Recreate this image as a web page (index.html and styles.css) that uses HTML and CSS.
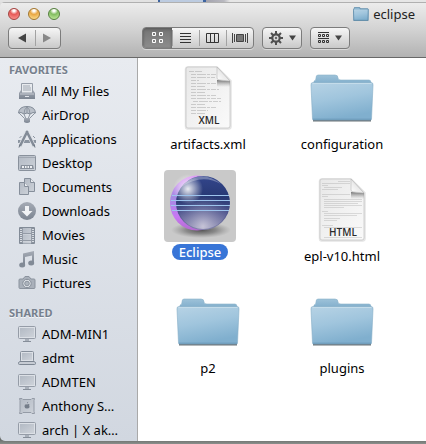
FILE: index.html
```html
<!DOCTYPE html>
<html lang="en">
<head>
<meta charset="utf-8">
<title>eclipse</title>
<link rel="stylesheet" href="styles.css">
</head>
<body>
<svg class="defs" aria-hidden="true">
  <defs>
    <linearGradient id="folder" x1="0" y1="0" x2="0.3" y2="1"><stop offset="0" stop-color="#b7d3e5"/><stop offset="0.5" stop-color="#a0c5dd"/><stop offset="1" stop-color="#80afce"/></linearGradient>
    <linearGradient id="tab" x1="0" y1="0" x2="0" y2="1"><stop offset="0" stop-color="#9dc2d9"/><stop offset="1" stop-color="#76a6c6"/></linearGradient>
    <linearGradient id="paper" x1="0" y1="0" x2="1" y2="1"><stop offset="0" stop-color="#e8e8e8"/><stop offset="1" stop-color="#fafafa"/></linearGradient>
    <linearGradient id="curl" x1="0" y1="1" x2="1" y2="0"><stop offset="0" stop-color="#fff"/><stop offset="1" stop-color="#d0d0d0"/></linearGradient>
    <linearGradient id="fold-shade" x1="0" y1="0" x2="0" y2="1"><stop offset="0" stop-color="#555" stop-opacity="0.8"/><stop offset="1" stop-color="#999" stop-opacity="0"/></linearGradient>
    <linearGradient id="steel" x1="0" y1="0" x2="0" y2="1"><stop offset="0" stop-color="#a5abb5"/><stop offset="1" stop-color="#7b8491"/></linearGradient>
    <linearGradient id="screen" x1="0" y1="0" x2="1" y2="1"><stop offset="0" stop-color="#b3bac4"/><stop offset="1" stop-color="#cdd2d9"/></linearGradient>
    <linearGradient id="orb" x1="0" y1="0" x2="0" y2="1"><stop offset="0" stop-color="#33468c"/><stop offset="0.4" stop-color="#273873"/><stop offset="0.7" stop-color="#50568e"/><stop offset="1" stop-color="#8484ac"/></linearGradient>
    <radialGradient id="glow" cx="0.5" cy="0.95" r="0.6"><stop offset="0" stop-color="#d4d1e0" stop-opacity="0.85"/><stop offset="1" stop-color="#8e8db4" stop-opacity="0"/></radialGradient>
    <radialGradient id="shine" cx="0.5" cy="0.5" r="0.5"><stop offset="0" stop-color="#fff" stop-opacity="0.9"/><stop offset="1" stop-color="#fff" stop-opacity="0"/></radialGradient>
    <linearGradient id="crescent" x1="0" y1="0" x2="0" y2="1"><stop offset="0" stop-color="#e09af5"/><stop offset="0.4" stop-color="#a48ae2"/><stop offset="0.75" stop-color="#c878f3"/><stop offset="1" stop-color="#b36bd0"/></linearGradient>
    <radialGradient id="shadow"><stop offset="0" stop-color="#333" stop-opacity="0.8"/><stop offset="0.5" stop-color="#555" stop-opacity="0.55"/><stop offset="1" stop-color="#777" stop-opacity="0"/></radialGradient>
  </defs>
  <symbol id="i-folder" viewBox="0 0 64 48">
    <path d="M3 46.500H61" stroke="#6b7479" stroke-width="2"/>
    <path d="M4 9V7q2 0 2-3Q6 1 8 1h17q3 0 3 3 0 2 3 2h28q2 0 2 3v4H4z" fill="url(#tab)" stroke="#8ab1c9" stroke-width="0.600"/>
    <path d="M1 11q-.3-2.500 2-2.500h58q2.300 0 2 2.500L61.500 45q0 1-1 1h-57q-1 0-1-1z" fill="url(#folder)" stroke="#85adc6" stroke-width="0.600"/>
    <path d="M2.500 9.500h59" stroke="#c4dcea"/>
    <path d="M3 45.200h58" stroke="#6b99b7"/>
  </symbol>
  <symbol id="i-page" viewBox="0 0 48 64">
    <path d="M2 3.500q0-2 2-2H33L46.500 15v45.500q0 2-2 2H3.500q-1.500 0-1.500-2z" fill="none" stroke="#999" stroke-opacity="0.250" stroke-width="2.500"/>
    <path d="M2 3q0-2 2-2H33L46 15v45q0 2-2 2H4q-2 0-2-2z" fill="url(#paper)" stroke="#c6c6c6" stroke-width="0.800"/>
    <path d="M33 14L46 15v6H33z" fill="url(#fold-shade)"/>
    <path d="M33 1v11q0 2 3 2l10 1z" fill="url(#curl)" stroke="#b5b5b5" stroke-width="0.600"/>
  </symbol>
  <symbol id="i-display" viewBox="0 0 18 18">
    <rect x="0.500" y="1.500" width="17" height="12" rx="1" fill="#dce0e6" stroke="#959ca7"/>
    <path d="M2 3h14v9H2z" fill="url(#screen)"/>
    <path d="M7 14h4v2H7z" fill="#a8afb9"/><path d="M5 16.500h8" stroke="#868e99"/>
  </symbol>
</svg>

<div class="desktop"></div>
<main class="window">
  <header class="toolbar">
    <div class="titlebar">
      <div class="lights">
        <button class="light red" aria-label="Close"></button>
        <button class="light yellow" aria-label="Minimize"></button>
        <button class="light green" aria-label="Zoom"></button>
      </div>
      <h1 class="title"><svg width="16" height="14" viewBox="0 0 64 48" preserveAspectRatio="none"><use href="#i-folder" width="64" height="48"/><path d="M2 11V8q3 0 3-4Q5 1 8 1h17q3 0 3 5h31q2 0 2 3v2l-1 35H3z" fill="none" stroke="#5b89a7" stroke-width="3"/></svg>eclipse</h1>
    </div>
    <div class="controls">
      <div class="group nav">
        <button aria-label="Back"><svg width="10" height="10"><path d="M1 5L9 .5v9z" fill="#444"/></svg></button>
        <button aria-label="Forward"><svg width="10" height="10"><path d="M9 5L1 .5v9z" fill="#888"/></svg></button>
      </div>
      <div class="group views">
        <button class="on" aria-label="Icon view"><svg width="12" height="12" fill="none" stroke="#fff"><path d="M.5.5h3v3h-3zM7.500.5h3v3h-3zM.5 7.500h3v3h-3zM7.500 7.500h3v3h-3z"/></svg></button>
        <button aria-label="List view"><svg width="11" height="10" stroke="#333"><path d="M0 .5h11M0 3.500h11M0 6.500h11M0 9.500h11"/></svg></button>
        <button aria-label="Column view"><svg width="13" height="10" fill="none" stroke="#333"><path d="M.5.5h12v9H.5zM4.500 0v10M8.500 0v10" /></svg></button>
        <button aria-label="Cover Flow"><svg width="16" height="10" fill="none" stroke="#444"><path d="M.5 0v10M2.500 1v8M13.500 1v8M15.500 0v10"/><path d="M4.500 1.500h7v7h-7z" fill="#777"/></svg></button>
      </div>
      <div class="group menu">
        <button aria-label="Action"><svg width="14" height="14" viewBox="-7 -7 14 14"><path d="M0-7V7M-7 0H7M-5-5L5 5M-5 5L5-5" stroke="#505050" stroke-width="2"/><circle r="3.700" fill="#ddd" stroke="#505050" stroke-width="2.200"/><circle r="1.200" fill="#666"/></svg><svg width="7" height="6"><path d="M0 .5h7L3.500 5.500z" fill="#444"/></svg></button>
      </div>
      <div class="group menu">
        <button aria-label="Arrange"><svg width="11" height="12" fill="none" stroke="#333"><path d="M0 .5h11M0 6.500h11"/><path d="M.5 2.500h2v2h-2zM4.500 2.500h2v2h-2zM8.500 2.500h2v2h-2zM.5 8.500h2v2h-2zM4.500 8.500h2v2h-2zM8.500 8.500h2v2h-2z"/></svg><svg width="7" height="6"><path d="M0 .5h7L3.500 5.500z" fill="#444"/></svg></button>
      </div>
    </div>
  </header>

  <div class="body">
    <nav class="sidebar">
      <h2>FAVORITES</h2>
      <ul>
        <li><a href="#files"><svg viewBox="0 0 18 18"><path d="M3.500 1.500h11V11h-11z" fill="#e7eaee" stroke="#979ea9"/><path d="M5 4h7M5 6h8M5 8h8" stroke="#a0a7b1"/><path d="M3 8l-2 3v6h16v-6l-2-3v3H3z" fill="url(#steel)"/><path d="M2 12h14" stroke="#c3c8d0"/><path d="M7 14.500h4" stroke="#e2e5ea"/></svg>All My Files</a></li>
        <li><a href="#airdrop"><svg viewBox="0 0 18 18"><path d="M.5 7Q1 .5 9 .5T17.500 7L15 6.500 12 8 9 7 6 8 3 6.500z" fill="#bac0c9" stroke="#828b97"/><path d="M6 8Q6 3 9 1q3 2 3 7M9 1v6" fill="none" stroke="#8e96a1"/><path d="M1 7l6 6M17 7l-6 6M6 8l2 5M12 8l-2 5" stroke="#8e96a1" fill="none"/><path d="M6 12h6v4q-3 2-6 0z" fill="url(#steel)"/></svg>AirDrop</a></li>
        <li><a href="#applications"><svg viewBox="0 0 18 18"><path d="M0 10h18v3H0z" fill="#8c95a1"/><path d="M3.500 6l-2 2M15 6l2 2" stroke="#8c95a1"/><path d="M8 2L2 17M10 2l6 15" stroke="#dfe3e8" stroke-width="4"/><path d="M9.500 1L2 16M8.500 1L16 16" stroke="#838c98" stroke-width="2.500"/><path d="M1 17.500l1-3M17 17.500l-1-3" stroke="#69727e"/></svg>Applications</a></li>
        <li><a href="#desktop"><svg viewBox="0 0 18 18"><rect x=".5" y="1.500" width="17" height="15" rx="1" fill="url(#screen)" stroke="#89919c"/><path d="M1 3.500h16" stroke="#a0a7b1"/><path d="M3 11h12l1 4H2z" fill="#89919c"/><path d="M4 13h2M7 13h1.500M9.500 13H11M12 13h2" stroke="#eef0f3" stroke-width="2"/></svg>Desktop</a></li>
        <li><a href="#documents"><svg viewBox="0 0 18 18"><g fill="url(#screen)" stroke="#868f9b"><path d="M6.500.5h6l4 4v9h-10z"/><path d="M12.500.5v4h4" fill="#e8ebef"/><path d="M1.500 4.500h5l4 4v8h-9z"/><path d="M6.500 4.500v4h4" fill="#e8ebef"/></g></svg>Documents</a></li>
        <li><a href="#downloads"><svg viewBox="0 0 18 18"><circle cx="9" cy="9" r="9" fill="url(#steel)"/><path d="M7 4h4v5h3.500L9 14.500 3.500 9H7z" fill="#f0f2f5"/></svg>Downloads</a></li>
        <li><a href="#movies"><svg viewBox="0 0 18 18"><path d="M1.500 1.500h15v16h-15z" fill="#d8dce2" stroke="#828b97"/><path d="M3 2v15M15 2v15" stroke="#8b939e" stroke-width="2" stroke-dasharray="1 1"/><path d="M5 2h8v5H5zM5 8.500h8v5.500H5zM5 15.500h8v2H5z" fill="url(#screen)"/><path d="M5 7.500h8M5 14.500h8M4.500 2v15M13.500 2v15" stroke="#949ba6"/></svg>Movies</a></li>
        <li><a href="#music"><svg viewBox="0 0 18 18"><path d="M5 3.500L16 1v12h-2V5.500L7 7v8H5z" fill="url(#steel)"/><ellipse cx="4.200" cy="15" rx="3" ry="2.500" fill="#818a96"/><ellipse cx="13.200" cy="13" rx="3" ry="2.500" fill="#818a96"/></svg>Music</a></li>
        <li><a href="#pictures"><svg viewBox="0 0 18 18"><path d="M2 5h3l2-2.500h4L13 5h3q1 0 1 1v7.500q0 1-1 1H2q-1 0-1-1V6q0-1 1-1z" fill="#a9b0ba" stroke="#8b939e"/><circle cx="9" cy="9.500" r="4.200" fill="#dfe3e8" stroke="#848c97"/><circle cx="9" cy="9.500" r="2.300" fill="#adb4bd" stroke="#8b939e"/></svg>Pictures</a></li>
      </ul>
      <h2>SHARED</h2>
      <ul>
        <li><a href="#adm-min1"><svg><use href="#i-display"/></svg>ADM-MIN1</a></li>
        <li><a href="#admt"><svg viewBox="0 0 18 18"><rect x="2.500" y="2.500" width="13" height="10" rx="1" fill="#dce0e6" stroke="#868f9b"/><path d="M4 4h10v7H4z" fill="url(#screen)"/><path d="M2 12.500h14l1.500 1v1q0 1-1 1h-15q-1 0-1-1v-1z" fill="#c7ccd4" stroke="#7d8692"/></svg>admt</a></li>
        <li><a href="#admten"><svg><use href="#i-display"/></svg>ADMTEN</a></li>
        <li><a href="#anthony"><svg viewBox="0 0 18 18"><path d="M1.500 1.500H4l1 1h8l1-1h2.500l-.5 2v11l.5 2H14l-1-1H5l-1 1H1.500l.5-2v-11z" fill="url(#screen)" stroke="#949ba6" stroke-linejoin="round"/><path d="M9 7.500q2-1 2.500.3-.8 1 .2 2.200-1 2-2.700 1.200-2 .8-2.500-1.700Q6.500 6.800 9 7.500zM9 6.500q0-1.500 1.200-1.800Q10.300 6.200 9 6.500z" fill="#747d89"/></svg>Anthony S…</a></li>
        <li><a href="#arch"><svg><use href="#i-display"/></svg>arch | X ak…</a></li>
      </ul>
    </nav>

    <section class="files">
      <a class="item" href="#artifacts"><span class="icon"><svg width="48" height="64" viewBox="0 0 48 64"><use href="#i-page"/><g stroke="#888" opacity=".35" stroke-dasharray="5 1 9 1 3 1"><path d="M5 5.500h13M7 8.500h25M7 11.500h24M7 14.500h8M7 17.500h26M7 20.500h14M7 23.500h28M7 26.500h14M7 29.500h25M7 32.500h30M9 35.500h28M7 38.500h14M7 41.500h25M7 44.500h17M7 47.500h14"/></g><text x="25" y="58" class="kind">XML</text></svg></span><span class="name">artifacts.xml</span></a>
      <a class="item" href="#configuration"><span class="icon"><svg width="64" height="48"><use href="#i-folder"/></svg></span><span class="name">configuration</span></a>
      <a class="item selected" href="#eclipse"><span class="icon"><svg width="72" height="72" viewBox="0 0 72 72">
        <ellipse cx="37" cy="60" rx="30" ry="8" fill="url(#shadow)"/>
        <ellipse cx="33" cy="33" rx="27" ry="27.500" fill="url(#crescent)"/>
        <ellipse cx="39" cy="33" rx="27" ry="27" fill="url(#orb)"/>
        <ellipse cx="39" cy="33" rx="26" ry="26" fill="url(#glow)"/>
        <ellipse cx="24" cy="19" rx="15" ry="15" fill="url(#shine)"/>
        <path d="M17 17Q36-3 57 14 38 3 17 17z" fill="#fff" opacity=".3"/>
        <path d="M8 25.500h57M7 30.500h59M7 35.500h59M8 40.500h57" stroke="#9dc4ed"/>
      </svg></span><span class="name">Eclipse</span></a>
      <a class="item" href="#epl"><span class="icon"><svg width="48" height="64" viewBox="0 0 48 64"><use href="#i-page"/><g stroke="#888" opacity=".25"><path d="M20 3.500h12M4 5.500h28M4 7.500h6M6 9.500h18M4 11.500h16M4 16.500h28M4 18.500h6M6 21.500h38M6 23.500h38M6 25.500h34M6 27.500h38M6 29.500h20M4 33.500h6M6 35.500h38M6 37.500h33M6 40.500h16M6 42.500h13M4 47.500h11M6 49.500h38M6 59.500h38"/></g><text x="25" y="58" class="kind">HTML</text></svg></span><span class="name">epl-v10.html</span></a>
      <a class="item" href="#p2"><span class="icon"><svg width="64" height="48"><use href="#i-folder"/></svg></span><span class="name">p2</span></a>
      <a class="item" href="#plugins"><span class="icon"><svg width="64" height="48"><use href="#i-folder"/></svg></span><span class="name">plugins</span></a>
    </section>
  </div>
</main>
</body>
</html>
```
FILE: styles.css
```css
* { box-sizing: border-box; }

body {
  margin: 0;
  height: 100vh;
  display: flex;
  flex-direction: column;
  padding-bottom: 3px;
  background: linear-gradient(#4e524f, #8b8f8c) bottom / 100% 8px no-repeat #dedede;
  font: 13px/16px "Noto Sans", "Open Sans", sans-serif;
  color: #000;
}

svg { display: block; flex: none; }
.defs { position: absolute; width: 0; height: 0; }
a { color: inherit; text-decoration: none; }

.desktop {
  height: 2px;
  flex: none;
  background: linear-gradient(90deg, #e2e2e2 158px, #3c63a0 158px, #3c63a0 160px, #bccbe0 160px, #bccbe0 203px, #3c63a0 203px, #3c63a0 206px, #a3a3ae 206px, #b9b9c0 224px, #e6e6e6 230px);
}

.window {
  flex: 1;
  min-height: 0;
  display: flex;
  flex-direction: column;
  border-radius: 5px 0 0 5px;
  overflow: hidden;
}

.toolbar {
  height: 56px;
  flex: none;
  border-top: 1px solid #b0b0b0;
  border-bottom: 1px solid #686868;
  background: linear-gradient(#ececec, #d2d2d2 50%, #b2b2b2);
}

.titlebar {
  display: flex;
  align-items: center;
  justify-content: space-between;
  height: 22px;
  padding: 0 11px 0 8px;
}

.lights { display: flex; gap: 8px; }
.light {
  width: 12px;
  height: 12px;
  padding: 0;
  border: 1px solid;
  border-radius: 50%;
}
.red { background: radial-gradient(circle at 50% 15%, #fff 0 10%, #e65a58 40%, #ff9d98); border-color: #a24340; }
.yellow { background: radial-gradient(circle at 50% 15%, #fff 0 10%, #e9a744 40%, #ffe79a); border-color: #a2762f; }
.green { background: radial-gradient(circle at 50% 15%, #fff 0 10%, #83bd62 40%, #cbf2a5); border-color: #557f40; }

.title {
  display: flex;
  align-items: center;
  gap: 4px;
  margin: 0;
  font-size: 13px;
  font-weight: 400;
  color: #222;
}

.controls { display: flex; gap: 8px; padding: 2px 8px; }
.group {
  display: flex;
  height: 22px;
  border: 1px solid #7c7c7c;
  border-radius: 4px;
  background: linear-gradient(#f6f6f6, #c9c9c9);
  box-shadow: 0 1px 0 #d8d8d8;
  overflow: hidden;
}
.group button {
  flex: 1;
  display: flex;
  align-items: center;
  justify-content: center;
  gap: 6px;
  padding: 0;
  border: 0;
  background: linear-gradient(#a2a2a2, #a2a2a2) left / 1px 16px no-repeat;
}
.group button:first-child { background: none; }
.group .on:first-child { background: linear-gradient(#747474, #8d8d8d); box-shadow: inset 0 1px 3px #555; }
.nav { width: 53px; margin-right: 73px; }
.views { width: 112px; }
.views .on { flex: 0 0 29px; }
.menu { width: 40px; }

.body { flex: 1; min-height: 0; display: flex; }

.sidebar {
  width: 138px;
  flex: none;
  padding-top: 4px;
  overflow: hidden;
  border-right: 1px solid #a9a9a9;
  background: linear-gradient(#e8ebf0, #d1d7e0);
}
.sidebar h2 {
  margin: 0;
  padding-left: 9px;
  font-size: 11px;
  line-height: 16px;
  font-weight: 700;
  color: #76808d;
  text-shadow: 0 1px 0 #f4f6f8;
}
.sidebar ul { margin: 0 0 10px; padding: 1px 0 0; list-style: none; }
.sidebar a {
  display: flex;
  align-items: center;
  gap: 6px;
  height: 24px;
  padding-left: 18px;
  white-space: nowrap;
}
.sidebar svg { width: 18px; height: 18px; }

.files {
  flex: 1;
  display: grid;
  grid-template-columns: repeat(auto-fill, 134px);
  grid-auto-rows: 112px;
  padding-left: 3px;
  overflow: hidden;
  background: #fff;
}
.item {
  display: flex;
  flex-direction: column;
  align-items: center;
  gap: 6px;
  padding-top: 8px;
}
.icon { display: flex; align-items: center; height: 64px; }
.kind { font: 600 10px "Open Sans", "Noto Sans", sans-serif; text-anchor: middle; fill: #2b2b2b; }

.selected { width: 118px; padding-top: 0; gap: 2px; }
.selected .icon { height: 72px; border-radius: 4px; background: #c9c9c9; }
.selected .name {
  padding: 0 7px;
  border-radius: 8px;
  background: #3875d7;
  color: #fff;
  font-weight: 500;
}
```
